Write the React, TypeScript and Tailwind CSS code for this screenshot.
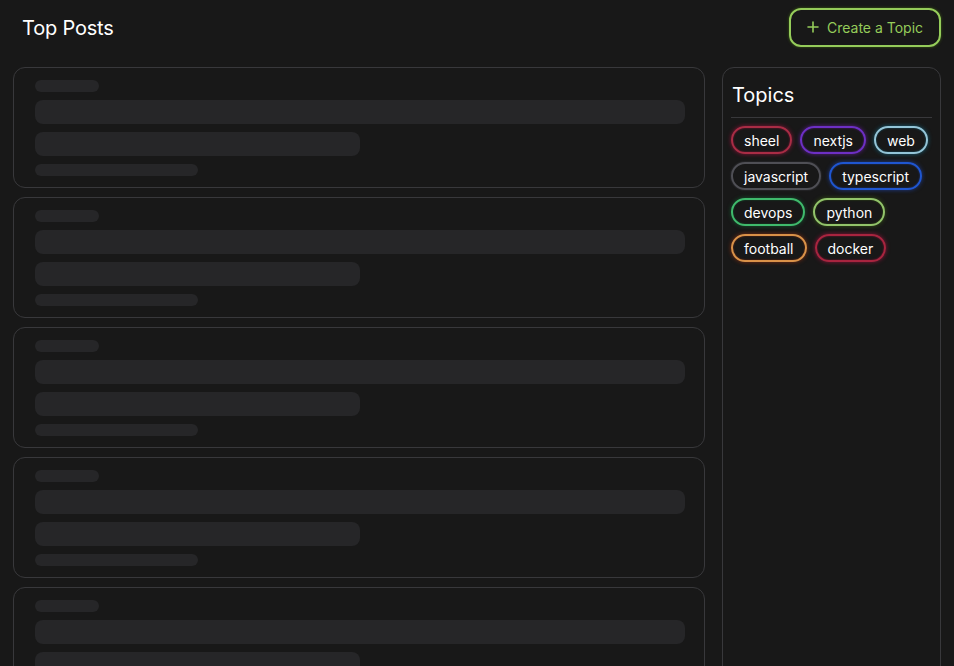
import React from "react";

const tags: { name: string; cls: string }[] = [
  { name: "sheel", cls: "border-[#a92c45] shadow-[0_0_4px_#881337,inset_0_0_2px_#881337]" },
  { name: "nextjs", cls: "border-[#6d2fc4] shadow-[0_0_4px_#581c87,inset_0_0_2px_#581c87]" },
  { name: "web", cls: "border-[#93c5d8] shadow-[0_0_4px_#155e75,inset_0_0_2px_#155e75]" },
  { name: "javascript", cls: "border-[#4f4f55] shadow-[0_0_2px_#3f3f46]" },
  { name: "typescript", cls: "border-[#1f56d0] shadow-[0_0_4px_#1e3a8a,inset_0_0_2px_#1e3a8a]" },
  { name: "devops", cls: "border-[#3fba6c] shadow-[0_0_4px_#14532d,inset_0_0_2px_#14532d]" },
  { name: "python", cls: "border-[#92c46a] shadow-[0_0_4px_#365314,inset_0_0_2px_#365314]" },
  { name: "football", cls: "border-[#d99148] shadow-[0_0_4px_#7c2d12,inset_0_0_2px_#7c2d12]" },
  { name: "docker", cls: "border-[#a8243f] shadow-[0_0_4px_#881337,inset_0_0_2px_#881337]" },
];

function SkeletonCard() {
  return (
    <div className="h-[121px] shrink-0 rounded-xl border border-[#38383b] pl-[21px] pr-[19px] pt-[12px] flex flex-col gap-[8px]">
      <div className="h-[12px] w-[64px] rounded-full bg-[#262628]" />
      <div className="h-[24px] w-full rounded-lg bg-[#262628]" />
      <div className="h-[24px] w-1/2 rounded-lg bg-[#262628]" />
      <div className="h-[12px] w-1/4 rounded-full bg-[#262628]" />
    </div>
  );
}

export default function App() {
  return (
    <div
      className="w-[954px] h-[666px] overflow-hidden bg-[#181818] text-white"
      style={{ fontFamily: "Inter, 'Noto Sans', sans-serif" }}
    >
      <div className="flex items-center justify-between pl-[22px] pr-[13px] pt-[7px] h-[47px]">
        <h1 className="text-[20px] font-normal leading-none tracking-[-0.2px] pt-[2px]">Top Posts</h1>
        <button className="h-[39px] w-[152px] rounded-xl border-2 border-[#95cc5a] shadow-[0_0_3px_#3f6212] flex items-center justify-center gap-[8px] text-[#95cc5a] text-[14px]">
          <svg width="12" height="12" viewBox="0 0 12 12" fill="none" stroke="#95cc5a" strokeWidth="1.6" strokeLinecap="round">
            <path d="M6 1v10M1 6h10" />
          </svg>
          <span>Create a Topic</span>
        </button>
      </div>
      <div className="flex gap-[17px] pl-[13px] pr-[13px] pt-[20px]">
        <div className="w-[692px] flex flex-col gap-[9px]">
          <SkeletonCard />
          <SkeletonCard />
          <SkeletonCard />
          <SkeletonCard />
          <SkeletonCard />
        </div>
        <div className="w-[219px] h-[620px] rounded-xl border border-[#38383b] px-[8px] pt-[14px]">
          <h2 className="text-[20px] leading-[26px] font-normal pb-[9px] border-b border-[#38383b] pl-[1px]">Topics</h2>
          <div className="flex flex-wrap gap-x-[8px] gap-y-[8px] pt-[8px]">
            {tags.map((t) => (
              <span
                key={t.name}
                className={`h-[28px] px-[11px] rounded-full border-2 flex items-center text-[14px] text-white ${t.cls}`}
              >
                {t.name}
              </span>
            ))}
          </div>
        </div>
      </div>
    </div>
  );
}
